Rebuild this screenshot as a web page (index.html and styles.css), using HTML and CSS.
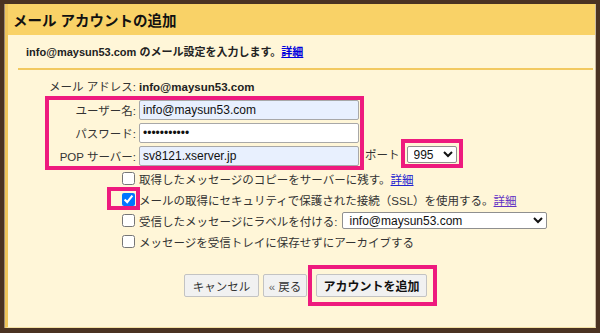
FILE: index.html
```html
<!DOCTYPE html>
<html lang="ja">
<head>
  <meta charset="UTF-8">
  <meta name="viewport" content="width=device-width, initial-scale=1.0">
  <title>メール アカウントの追加</title>
  <link rel="stylesheet" href="styles.css">
</head>
<body>
  <div class="window">
    <div class="panel">
      <div class="header">
        <h1>メール アカウントの追加</h1>
      </div>

      <p class="intro">info@maysun53.com のメール設定を入力します。<a href="#" class="more">詳細</a></p>

      <div class="form">
        <div class="row email">
          <span class="label">メール アドレス:</span>
          <b>info@maysun53.com</b>
        </div>

        <div class="server">
          <div class="creds mark">
            <div class="row">
              <label class="label" for="user">ユーザー名:</label>
              <input class="field auto" id="user" type="text" value="info@maysun53.com">
            </div>
            <div class="row">
              <label class="label" for="pass">パスワード:</label>
              <input class="field" id="pass" type="password" value="xxxxxxxxxxx">
            </div>
            <div class="row">
              <label class="label" for="host">POP サーバー:</label>
              <input class="field auto" id="host" type="text" value="sv8121.xserver.jp">
            </div>
          </div>

          <div class="port">
            <label for="port">ポート</label>
            <span class="mark port-mark">
              <select class="sel port-sel" id="port">
                <option>995</option>
                <option>110</option>
              </select>
            </span>
          </div>
        </div>

        <div class="options">
          <label class="opt">
            <input type="checkbox">
            取得したメッセージのコピーをサーバーに残す。<a href="#" class="link">詳細</a>
          </label>
          <label class="opt">
            <span class="hl"><input type="checkbox" checked></span>
            メールの取得にセキュリティで保護された接続（SSL）を使用する。<a href="#" class="link visited">詳細</a>
          </label>
          <label class="opt">
            <input type="checkbox">
            受信したメッセージにラベルを付ける:
            <select class="sel label-sel">
              <option>info@maysun53.com</option>
            </select>
          </label>
          <label class="opt">
            <input type="checkbox">
            メッセージを受信トレイに保存せずにアーカイブする
          </label>
        </div>

        <div class="actions">
          <button class="btn cancel">キャンセル</button>
          <button class="btn back"><span class="arrow">«</span> 戻る</button>
          <span class="mark add-mark">
            <button class="btn add">アカウントを追加</button>
          </span>
        </div>
      </div>
    </div>
  </div>
</body>
</html>
```

FILE: styles.css
```css
html,
body {
  margin: 0;
  height: 100%;
}

body {
  background: #4a3222;
  font-family: "Liberation Sans", "Noto Sans CJK JP", sans-serif;
  font-size: 11.5px;
  color: #222;
  overflow: hidden;
}

.window {
  height: 333px;
  padding: 4px 4px 5px 5px;
  box-sizing: border-box;
}

.panel {
  height: 100%;
  background: #fff6d8;
  border-left: 3px solid #efc55c;
  border-right: 1px solid #c9b9a0;
  border-bottom: 1px solid #f3e0a4;
  box-shadow: -1px 0 0 #9a8a7a;
  box-sizing: border-box;
}

.header {
  height: 31px;
  display: flex;
  align-items: center;
  padding-left: 5px;
  background: #f9d267;
}

.header h1 {
  margin: 0;
  font-size: 14.5px;
  font-weight: bold;
  color: #111;
}

.intro {
  margin: 0 2px 0 10px;
  padding: 9px 0 8px 8px;
  line-height: 16px;
  font-size: 11px;
  font-weight: bold;
  border-bottom: 2px solid #f2c960;
}

.more {
  color: #0000dd;
}

/* annotation boxes */
.mark {
  border: 4px solid #ee1a7e;
}

.form {
  padding-left: 37px;
}

.row {
  display: flex;
  align-items: center;
  gap: 3px;
}

.label {
  width: 87px;
  text-align: right;
  white-space: nowrap;
  color: #333;
}

.email {
  margin-top: 9px;
  line-height: 16px;
  padding-left: 4px;
}

.server {
  display: flex;
  align-items: flex-end;
  margin-top: 1px;
}

.creds {
  padding-right: 1px;
}

.creds .row + .row {
  margin-top: 3px;
}

.field {
  width: 220px;
  height: 20px;
  box-sizing: border-box;
  margin: 0;
  padding: 0 3px;
  border: 1px solid #a8a8a8;
  border-radius: 2px;
  background: #fff;
  font: 12px "Liberation Sans", sans-serif;
  color: #111;
}

.field.auto {
  background: #e8f0fe;
}

.port {
  display: flex;
  align-items: center;
  margin-left: 1px;
  margin-bottom: 2px;
  color: #333;
}

.port-mark {
  margin-left: 1px;
  padding: 3px 2px 1px 2px;
  display: flex;
}

.sel {
  height: 17px;
  box-sizing: border-box;
  margin: 0;
  padding: 0 0 0 2px;
  border: 1px solid #8f8f8f;
  border-radius: 2px;
  background: #fff;
  font: 12px "Liberation Sans", sans-serif;
  color: #111;
}

.port-sel {
  width: 50px;
}

.options {
  margin-top: -2px;
  padding-left: 77px;
  color: #333;
}

.opt {
  display: flex;
  align-items: center;
  height: 21px;
  white-space: nowrap;
}

.opt input[type="checkbox"] {
  width: 13px;
  height: 13px;
  margin: 0 4px 0 0;
}

.hl {
  position: relative;
  display: flex;
  margin-right: 4px;
}

.hl input[type="checkbox"] {
  margin: 0;
}

.hl::after {
  content: "";
  position: absolute;
  left: -15px;
  top: -6px;
  width: 33px;
  height: 23px;
  border: 4px solid #ee1a7e;
  box-sizing: border-box;
}

.link {
  color: #2323d0;
}

.link.visited {
  color: #6232c4;
}

.label-sel {
  width: 205px;
  margin-left: 5px;
}

.actions {
  display: flex;
  align-items: center;
  margin-top: 13px;
  padding-left: 139px;
}

.btn {
  height: 23px;
  margin: 0;
  padding: 0;
  border: 1px solid #c3c3c3;
  border-radius: 2px;
  background: #f1f1f1;
  font: 11.5px "Liberation Sans", "Noto Sans CJK JP", sans-serif;
  color: #333;
}

.cancel {
  width: 75px;
}

.back {
  width: 44px;
  margin-left: 4px;
}

.arrow {
  color: #666;
}

.add-mark {
  margin-left: 1px;
  padding: 5px 6px 5px 4px;
  display: flex;
}

.add {
  width: 111px;
  font-size: 12px;
  font-weight: bold;
  color: #111;
}
```
